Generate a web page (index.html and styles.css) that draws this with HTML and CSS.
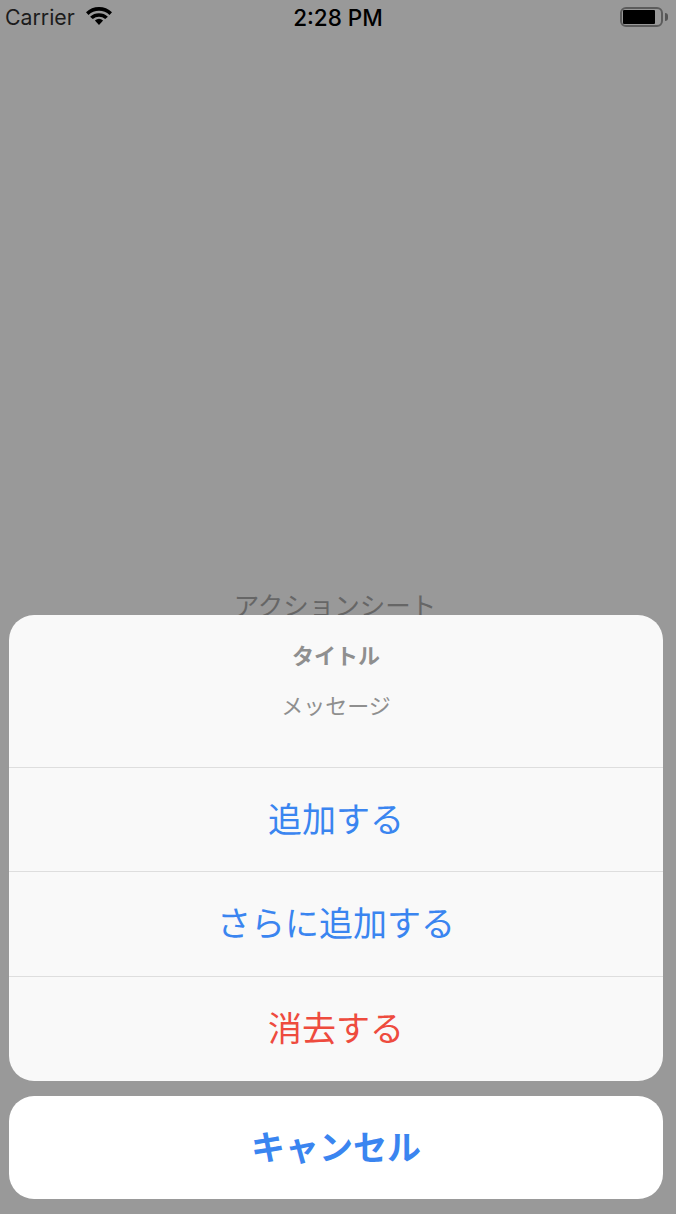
FILE: index.html
```html
<!DOCTYPE html>
<html lang="ja">
<head>
    <meta charset="UTF-8">
    <meta name="viewport" content="width=device-width, initial-scale=1.0">
    <title>アクションシート</title>
    <link rel="stylesheet" href="styles.css">
</head>
<body>
    <div class="screen">
        <div class="status-bar">
            <div class="status-left">
                <span class="carrier">Carrier</span>
                <svg class="wifi" width="26" height="18" viewBox="0 0 26 18">
                    <path d="M13 18 L8.9 13.4 A6.4 6.4 0 0 1 17.1 13.4 Z" fill="#000"/>
                    <path d="M0 5.2 A19 19 0 0 1 26 5.2 L23.5 8 A15.4 15.4 0 0 0 2.5 8 Z" fill="#000"/>
                    <path d="M4.1 9.7 A13.4 13.4 0 0 1 21.9 9.7 L19.2 12.1 A9.6 9.6 0 0 0 6.8 12.1 Z" fill="#000"/>
                </svg>
            </div>
            <div class="status-time">2:28 PM</div>
            <div class="status-right">
                <div class="battery"><div class="battery-level"></div></div>
                <div class="battery-tip"></div>
            </div>
        </div>
        <div class="content">
            <div class="page-label">アクションシート</div>
        </div>

        <div class="sheet">
            <div class="sheet-group">
                <div class="sheet-header">
                    <div class="sheet-title">タイトル</div>
                    <div class="sheet-message">メッセージ</div>
                </div>
                <div class="sheet-action">追加する</div>
                <div class="sheet-action">さらに追加する</div>
                <div class="sheet-action danger">消去する</div>
            </div>
            <div class="sheet-cancel">キャンセル</div>
        </div>
    </div>
</body>
</html>
```

FILE: styles.css
```css
html, body {
    margin: 0;
    padding: 0;
}

body {
    font-family: "Liberation Sans", "Noto Sans CJK JP", sans-serif;
}

.screen {
    position: relative;
    width: 676px;
    height: 1214px;
    background-color: #999999;
    overflow: hidden;
}

.status-bar {
    display: grid;
    grid-template-columns: 1fr auto 1fr;
    align-items: center;
    height: 34px;
    padding: 0 6px;
    color: #000;
}

.status-left {
    display: flex;
    align-items: center;
    gap: 11px;
    margin-left: -1px;
}

.carrier {
    font-family: "Inter", "Liberation Sans", sans-serif;
    font-size: 21.3px;
    color: #1c1c1c;
}

.wifi {
    margin-top: -2px;
}

.status-time {
    font-family: "Inter", "Liberation Sans", sans-serif;
    font-size: 22.5px;
    font-weight: 500;
}

.status-right {
    display: flex;
    align-items: center;
    justify-content: flex-end;
    gap: 2px;
    padding-right: 2px;
}

.battery {
    box-sizing: border-box;
    width: 43px;
    height: 20px;
    padding: 1px;
    border: 2px solid #5c5c5c;
    border-radius: 6px;
}

.battery-level {
    width: 32px;
    height: 100%;
    background-color: #000;
    border-radius: 1px;
}

.battery-tip {
    width: 3px;
    height: 8px;
    background-color: #555;
    border-radius: 0 3px 3px 0;
}

.content {
    display: flex;
    justify-content: center;
    padding-top: 554px;
    padding-right: 6px;
}

.page-label {
    font-size: 25.5px;
    line-height: 36px;
    color: #666666;
}

.sheet {
    position: absolute;
    left: 9px;
    right: 13px;
    top: 615px;
    display: flex;
    flex-direction: column;
    gap: 15px;
}

.sheet-group {
    background-color: #f9f9f9;
    border-radius: 25px;
    overflow: hidden;
}

.sheet-header {
    box-sizing: border-box;
    height: 152px;
    padding-top: 27px;
    text-align: center;
}

.sheet-title {
    font-size: 22px;
    line-height: 30px;
    font-weight: bold;
    color: #8f8f8f;
}

.sheet-message {
    margin-top: 20px;
    font-size: 22px;
    line-height: 30px;
    color: #8f8f8f;
}

.sheet-action {
    box-sizing: border-box;
    height: 104.4px;
    padding-bottom: 5px;
    border-top: 1px solid #dedede;
    display: flex;
    align-items: center;
    justify-content: center;
    font-size: 34px;
    color: #3a85f0;
}

.danger {
    height: 105.2px;
    color: #ee4b3e;
}

.sheet-cancel {
    display: flex;
    align-items: center;
    justify-content: center;
    height: 103px;
    padding-bottom: 4px;
    box-sizing: border-box;
    background-color: #fff;
    border-radius: 25px;
    font-size: 34px;
    font-weight: bold;
    color: #3a85f0;
}
```
